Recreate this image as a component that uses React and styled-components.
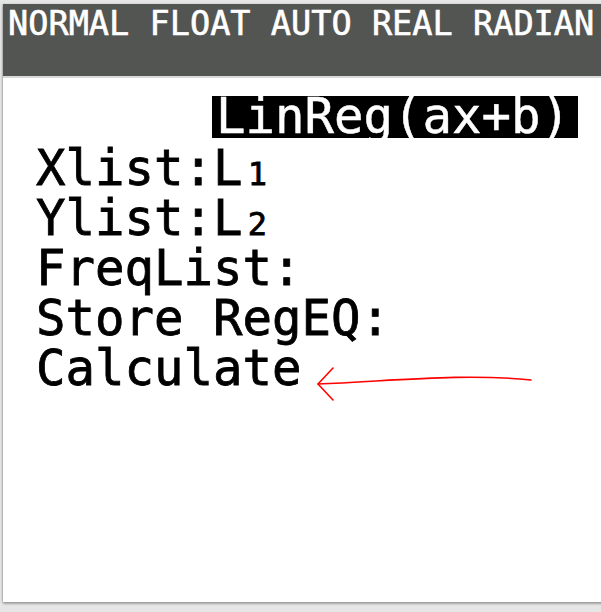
import React from "react";
import styled, { createGlobalStyle } from "styled-components";

const Global = createGlobalStyle`
  html, body { margin: 0; padding: 0; }
  body {
    background: #e6e6e6;
    width: 601px;
    height: 612px;
    overflow: hidden;
  }
`;

const Frame = styled.div`
  position: relative;
  margin: 4px 0 0 3px;
  width: 620px;
  height: 598px;
  background: #ffffff;
  box-shadow: 0 2px 2px rgba(0, 0, 0, 0.28), -1px 0 2px rgba(0, 0, 0, 0.18);
  display: flex;
  flex-direction: column;
`;

const StatusBar = styled.div`
  height: 74px;
  background: #535552;
  border-bottom: 2px solid #d9d9d9;
  box-sizing: border-box;
  padding: 0 0 0 5px;
  color: #ffffff;
  font-family: "DejaVu Sans Mono", "Liberation Mono", monospace;
  font-size: 33.6px;
  line-height: 40px;
  white-space: pre;
  -webkit-text-stroke: 0.6px #ffffff;
`;

const Screen = styled.div`
  padding: 16px 0 0 33px;
  font-family: "DejaVu Sans Mono", "Liberation Mono", monospace;
  font-size: 49px;
  line-height: 50px;
  color: #000;
  -webkit-text-stroke: 0.8px #000;
`;

const Line = styled.div`
  white-space: pre;
  height: 50px;
`;

const Highlight = styled.span`
  display: inline-block;
  margin-left: ${(p) => p.$indent}px;
  padding: 0 8px 0 4px;
  background: #000;
  color: #fff;
  line-height: 42px;
  vertical-align: 2px;
  -webkit-text-stroke: 0.5px #fff;
`;

const Sub = styled.span`
  display: inline-block;
  width: 29.5px;
  font-size: 32px;
  line-height: 1;
  vertical-align: baseline;
  text-align: center;
`;

const Arrow = styled.svg`
  position: absolute;
  left: 310px;
  top: 355px;
  overflow: visible;
`;

export default function App() {
  return (
    <>
      <Global />
      <Frame>
        <StatusBar>NORMAL FLOAT AUTO REAL RADIAN</StatusBar>
        <Screen>
          <Line>
            <Highlight $indent={176}>LinReg(ax+b)</Highlight>
          </Line>
          <Line>
            Xlist:L<Sub>1</Sub>
          </Line>
          <Line>
            Ylist:L<Sub>2</Sub>
          </Line>
          <Line>FreqList:</Line>
          <Line>Store RegEQ:</Line>
          <Line>Calculate</Line>
        </Screen>
        <Arrow width="230" height="50">
          <path
            d="M5 25 C 80 22, 150 14, 218 21"
            fill="none"
            stroke="#f00"
            strokeWidth="1.6"
            strokeLinecap="round"
          />
          <path
            d="M20 9 L 5 25 L 20 41"
            fill="none"
            stroke="#f00"
            strokeWidth="1.6"
            strokeLinecap="round"
            strokeLinejoin="round"
          />
        </Arrow>
      </Frame>
    </>
  );
}
